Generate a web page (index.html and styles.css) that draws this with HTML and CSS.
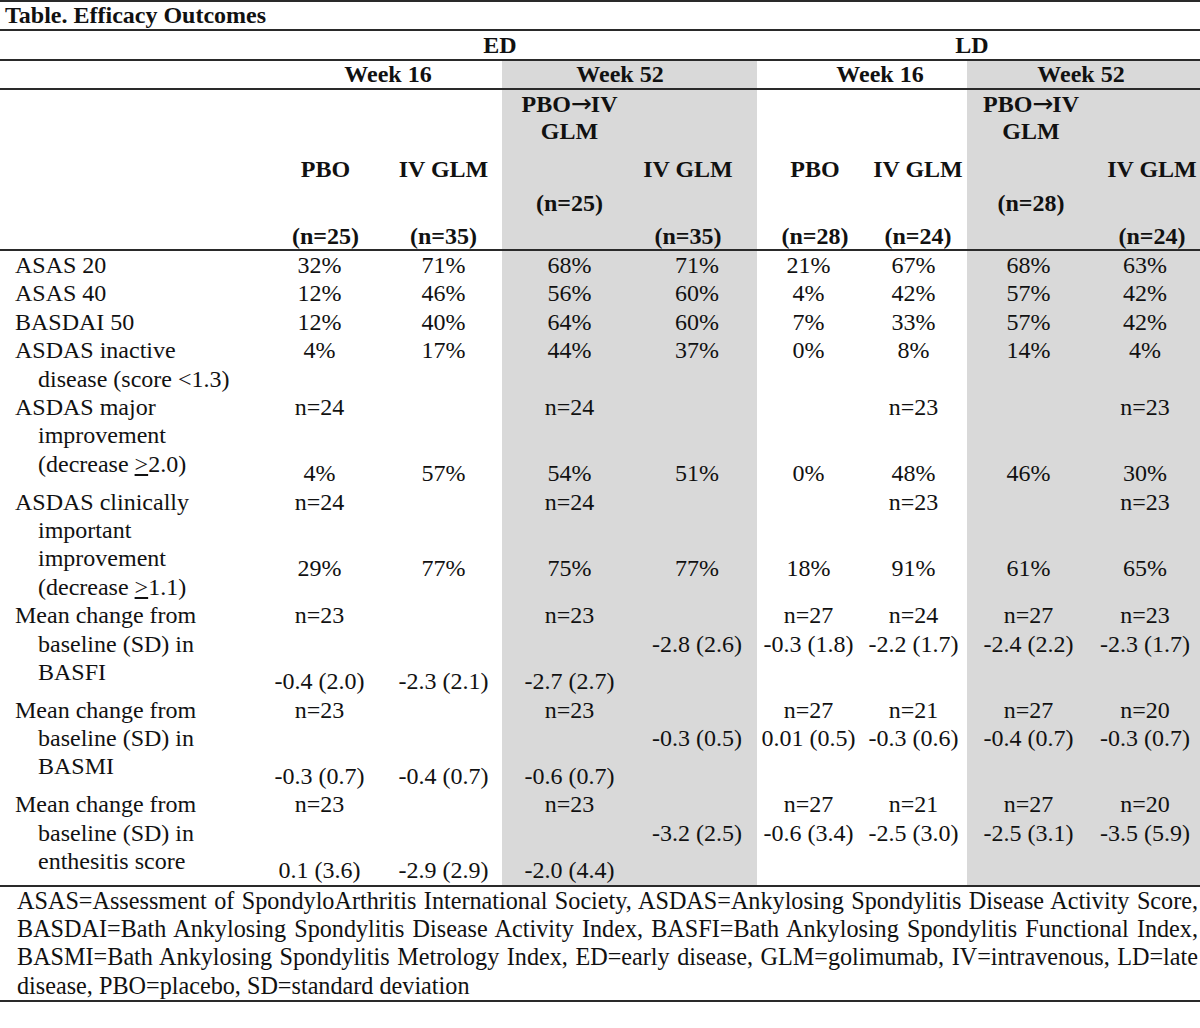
FILE: index.html
```html
<!DOCTYPE html>
<html lang="en">
<head>
<meta charset="utf-8">
<title>Table. Efficacy Outcomes</title>
<link rel="stylesheet" href="styles.css">
</head>
<body>
<div class="sheet">
  <div class="title">Table. Efficacy Outcomes</div>

  <div class="row grp">
    <div></div>
    <div class="ed">ED</div>
    <div class="ld">LD</div>
  </div>

  <div class="row wk">
    <div></div>
    <div class="w16a">Week 16</div>
    <div class="w52a">Week 52</div>
    <div class="w16b">Week 16</div>
    <div class="w52b">Week 52</div>
  </div>

  <div class="row hd">
    <div></div>
    <div><span class="rc">PBO</span><span class="re">(n=25)</span></div>
    <div><span class="rc">IV GLM</span><span class="re">(n=35)</span></div>
    <div><span class="ra">PBO<span class="arr">→</span>IV</span><span class="rb">GLM</span><span class="rd">(n=25)</span></div>
    <div><span class="rc">IV GLM</span><span class="re">(n=35)</span></div>
    <div><span class="rc">PBO</span><span class="re">(n=28)</span></div>
    <div><span class="rc">IV GLM</span><span class="re">(n=24)</span></div>
    <div><span class="ra">PBO<span class="arr">→</span>IV</span><span class="rb">GLM</span><span class="rd">(n=28)</span></div>
    <div><span class="rc">IV GLM</span><span class="re">(n=24)</span></div>
  </div>

  <div class="row data">
    <div class="lab">ASAS 20</div>
    <div>32%</div><div>71%</div><div>68%</div><div>71%</div>
    <div>21%</div><div>67%</div><div>68%</div><div>63%</div>
  </div>
  <div class="row data">
    <div class="lab">ASAS 40</div>
    <div>12%</div><div>46%</div><div>56%</div><div>60%</div>
    <div>4%</div><div>42%</div><div>57%</div><div>42%</div>
  </div>
  <div class="row data">
    <div class="lab">BASDAI 50</div>
    <div>12%</div><div>40%</div><div>64%</div><div>60%</div>
    <div>7%</div><div>33%</div><div>57%</div><div>42%</div>
  </div>
  <div class="row data">
    <div class="lab">ASDAS inactive<br>disease (score &lt;1.3)</div>
    <div>4%</div><div>17%</div><div>44%</div><div>37%</div>
    <div>0%</div><div>8%</div><div>14%</div><div>4%</div>
  </div>
  <div class="row data">
    <div class="lab">ASDAS major<br>improvement<br>(decrease <span class="u">&gt;</span>2.0)</div>
    <div><span class="ln">n=24</span><span class="ln low">4%</span></div>
    <div><span class="ln low">57%</span></div>
    <div><span class="ln">n=24</span><span class="ln low">54%</span></div>
    <div><span class="ln low">51%</span></div>
    <div><span class="ln low">0%</span></div>
    <div><span class="ln">n=23</span><span class="ln low">48%</span></div>
    <div><span class="ln low">46%</span></div>
    <div><span class="ln">n=23</span><span class="ln low">30%</span></div>
  </div>
  <div class="row data">
    <div class="lab">ASDAS clinically<br>important<br>improvement<br>(decrease <span class="u">&gt;</span>1.1)</div>
    <div><span class="ln">n=24</span><span class="ln low">29%</span></div>
    <div><span class="ln low">77%</span></div>
    <div><span class="ln">n=24</span><span class="ln low">75%</span></div>
    <div><span class="ln low">77%</span></div>
    <div><span class="ln low">18%</span></div>
    <div><span class="ln">n=23</span><span class="ln low">91%</span></div>
    <div><span class="ln low">61%</span></div>
    <div><span class="ln">n=23</span><span class="ln low">65%</span></div>
  </div>
  <div class="row data">
    <div class="lab">Mean change from<br>baseline (SD) in<br>BASFI</div>
    <div><span class="ln">n=23</span><span class="ln low">-0.4 (2.0)</span></div>
    <div><span class="ln low">-2.3 (2.1)</span></div>
    <div><span class="ln">n=23</span><span class="ln low">-2.7 (2.7)</span></div>
    <div><span class="ln mid">-2.8 (2.6)</span></div>
    <div><span class="ln">n=27</span><span class="ln">-0.3 (1.8)</span></div>
    <div><span class="ln">n=24</span><span class="ln">-2.2 (1.7)</span></div>
    <div><span class="ln">n=27</span><span class="ln">-2.4 (2.2)</span></div>
    <div><span class="ln">n=23</span><span class="ln">-2.3 (1.7)</span></div>
  </div>
  <div class="row data">
    <div class="lab">Mean change from<br>baseline (SD) in<br>BASMI</div>
    <div><span class="ln">n=23</span><span class="ln low">-0.3 (0.7)</span></div>
    <div><span class="ln low">-0.4 (0.7)</span></div>
    <div><span class="ln">n=23</span><span class="ln low">-0.6 (0.7)</span></div>
    <div><span class="ln mid">-0.3 (0.5)</span></div>
    <div><span class="ln">n=27</span><span class="ln">0.01 (0.5)</span></div>
    <div><span class="ln">n=21</span><span class="ln">-0.3 (0.6)</span></div>
    <div><span class="ln">n=27</span><span class="ln">-0.4 (0.7)</span></div>
    <div><span class="ln">n=20</span><span class="ln">-0.3 (0.7)</span></div>
  </div>
  <div class="row data">
    <div class="lab">Mean change from<br>baseline (SD) in<br>enthesitis score</div>
    <div><span class="ln">n=23</span><span class="ln low">0.1 (3.6)</span></div>
    <div><span class="ln low">-2.9 (2.9)</span></div>
    <div><span class="ln">n=23</span><span class="ln low">-2.0 (4.4)</span></div>
    <div><span class="ln mid">-3.2 (2.5)</span></div>
    <div><span class="ln">n=27</span><span class="ln">-0.6 (3.4)</span></div>
    <div><span class="ln">n=21</span><span class="ln">-2.5 (3.0)</span></div>
    <div><span class="ln">n=27</span><span class="ln">-2.5 (3.1)</span></div>
    <div><span class="ln">n=20</span><span class="ln">-3.5 (5.9)</span></div>
  </div>

  <div class="foot">
    <span class="jl">ASAS=Assessment of SpondyloArthritis International Society, ASDAS=Ankylosing Spondylitis Disease Activity Score,</span>
    <span class="jl">BASDAI=Bath Ankylosing Spondylitis Disease Activity Index, BASFI=Bath Ankylosing Spondylitis Functional Index,</span>
    <span class="jl">BASMI=Bath Ankylosing Spondylitis Metrology Index, ED=early disease, GLM=golimumab, IV=intravenous, LD=late</span>
    <span class="last">disease, PBO=placebo, SD=standard deviation</span>
  </div>
</div>
</body>
</html>
```

FILE: styles.css
```css
html, body {
  margin: 0;
  padding: 0;
  background: #ffffff;
}

body {
  font-family: "Liberation Serif", "Times New Roman", serif;
  font-size: 24px;
  color: #111111;
}

.sheet {
  width: 1200px;
  border-top: 2px solid #2a2a2a;
}

.title {
  font-weight: bold;
  height: 27px;
  line-height: 27px;
  padding-left: 5px;
  border-bottom: 2px solid #2a2a2a;
}

.row {
  display: grid;
  grid-template-columns: 266px 119px 117px 135px 120px 103px 107px 123px 110px;
}

/* group row: ED / LD */
.grp {
  height: 28px;
  line-height: 28px;
  font-weight: bold;
  text-align: center;
  border-bottom: 2px solid #2a2a2a;
}
.grp .ed { grid-column: 2 / 6; padding-right: 23px; }
.grp .ld { grid-column: 6 / 10; padding-right: 13px; }

/* week row */
.wk {
  height: 27px;
  line-height: 27px;
  font-weight: bold;
  text-align: center;
  border-bottom: 2px solid #2a2a2a;
}
.wk .w16a { grid-column: 2 / 4; padding-left: 8px; }
.wk .w52a { grid-column: 4 / 6; padding-right: 19px; background: #d9d9d9; }
.wk .w16b { grid-column: 6 / 8; padding-left: 36px; }
.wk .w52b { grid-column: 8 / 10; padding-right: 5px; background: #d9d9d9; }

/* column header row */
.hd {
  height: 159px;
  font-weight: bold;
  border-bottom: 2px solid #2a2a2a;
}
.hd > div {
  display: grid;
  grid-template-rows: 28px 37.5px 34px 33px 26.5px;
  text-align: center;
  line-height: 27px;
  white-space: nowrap;
}
.hd .ra { grid-row: 1; }
.hd .rb { grid-row: 2; }
.hd .rc { grid-row: 3; }
.hd .rd { grid-row: 4; }
.hd .re { grid-row: 5; }
.hd .arr {
  font-family: "DejaVu Sans", sans-serif;
  font-weight: normal;
  font-size: 25px;
  letter-spacing: -1px;
}
.hd > :nth-child(5) { padding-right: 18px; }
.hd > :nth-child(6) { padding-left: 13px; }
.hd > :nth-child(7) { padding-left: 9px; }
.hd > :nth-child(8) { padding-left: 5px; }
.hd > :nth-child(9) { padding-left: 14px; }

/* shaded week 52 columns */
.hd > :nth-child(4),
.hd > :nth-child(5),
.hd > :nth-child(8),
.hd > :nth-child(9),
.data > :nth-child(4),
.data > :nth-child(5),
.data > :nth-child(8),
.data > :nth-child(9) {
  background: #d9d9d9;
}

/* data rows */
.data {
  line-height: 28.4px;
}
.data > div {
  text-align: center;
  white-space: nowrap;
}
.data > :nth-child(2) { padding-right: 12px; }
.data > .lab {
  text-align: left;
  padding-left: 38px;
  text-indent: -23px;
}
.data .ln { display: block; }
.data .low { margin-top: 66.1px; }
.data .ln + .low { margin-top: 37.7px; }
.data .mid { margin-top: 28.4px; }

.u { text-decoration: underline; }

/* footnote */
.foot {
  border-top: 2px solid #2a2a2a;
  border-bottom: 2px solid #2a2a2a;
  padding: 0 2px 0 17px;
  font-size: 24.2px;
  line-height: 28.4px;
}
.foot .jl {
  display: block;
  text-align: justify;
  text-align-last: justify;
  white-space: nowrap;
}
.foot .last { display: block; }
```
